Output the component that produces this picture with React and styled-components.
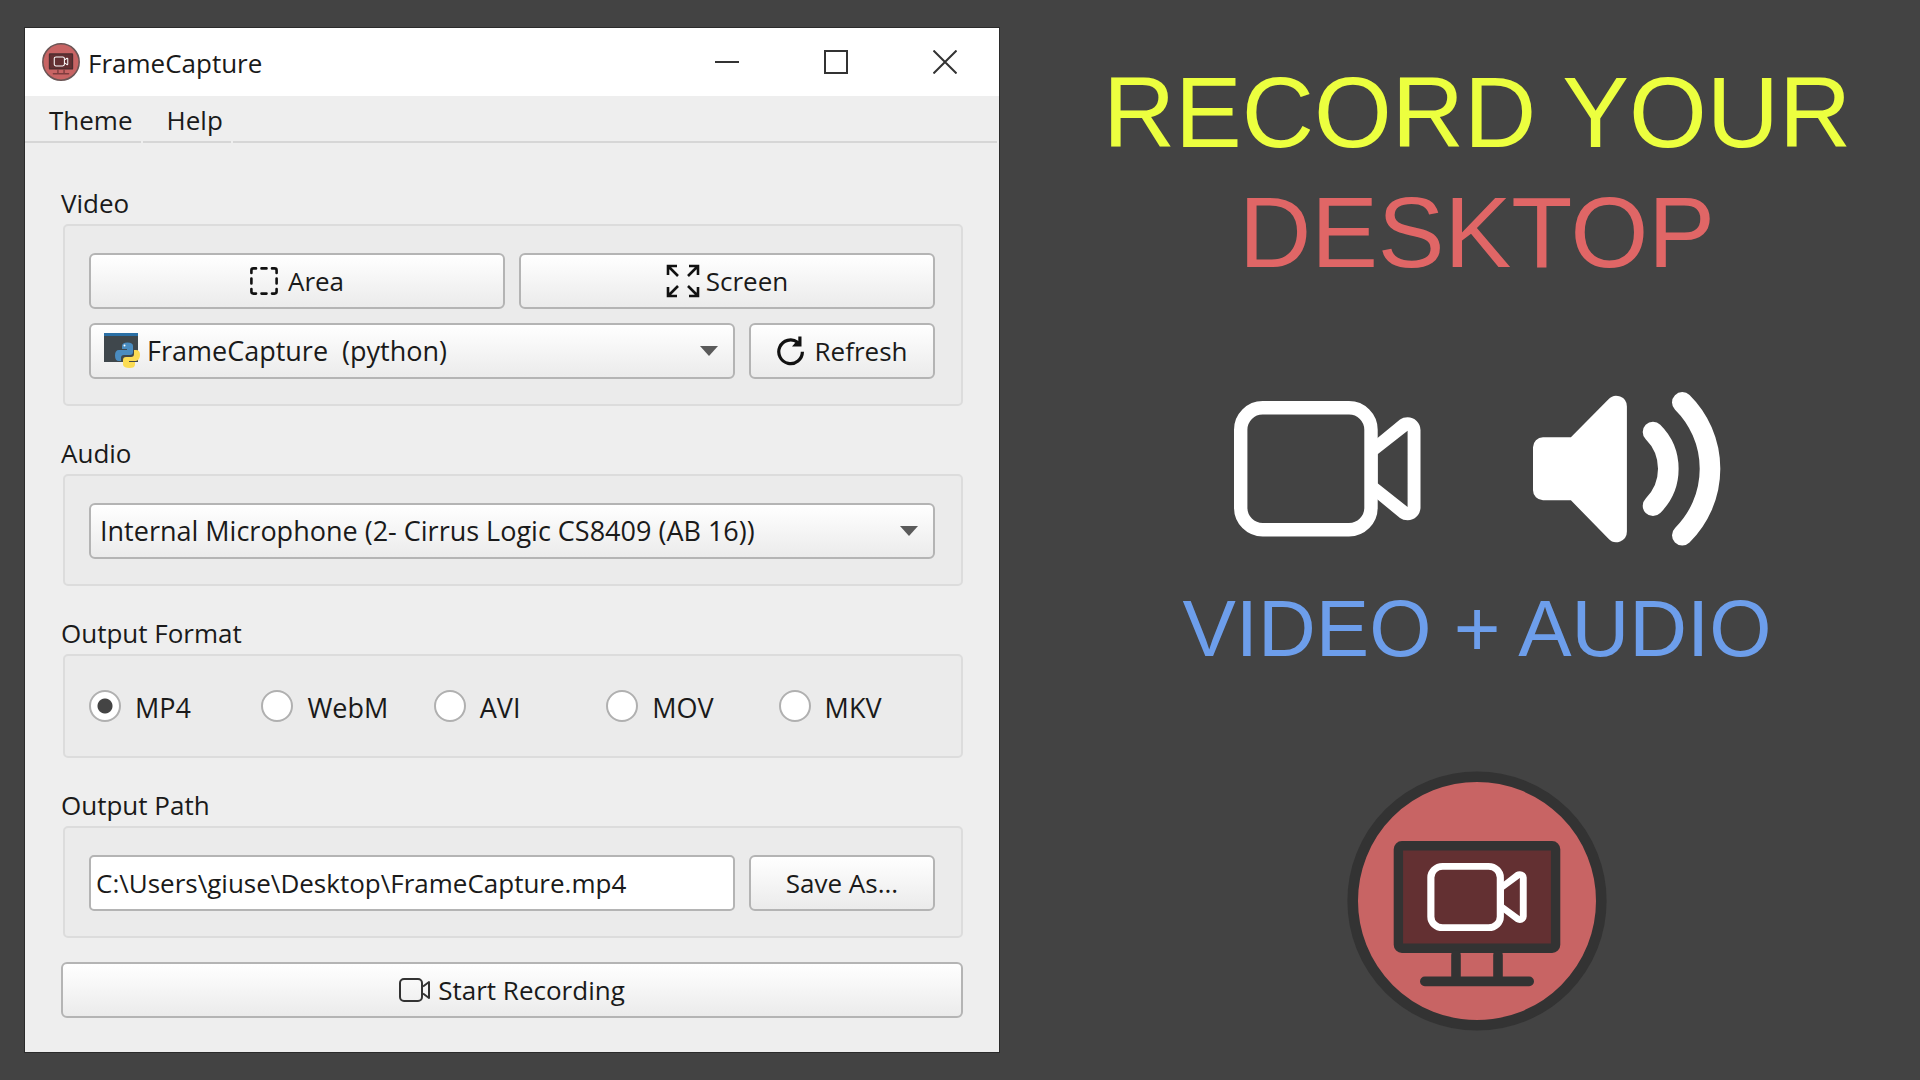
import { useState } from "react";
import styled, { createGlobalStyle } from "styled-components";

const formats = ["MP4", "WebM", "AVI", "MOV", "MKV"];

export default function App() {
  const [format, setFormat] = useState("MP4");
  const [path, setPath] = useState("C:\\Users\\giuse\\Desktop\\FrameCapture.mp4");

  return (
    <>
      <GlobalStyle />
      <Page>
        <Window>
          <TitleBar>
            <Logo small />
            <Title>FrameCapture</Title>
            <WindowButton aria-label="Minimize">
              <svg width="24" height="24" viewBox="0 0 24 24">
                <path d="M0 12h24" />
              </svg>
            </WindowButton>
            <WindowButton aria-label="Maximize">
              <svg width="24" height="24" viewBox="0 0 24 24">
                <path d="M1 1h22v22H1z" />
              </svg>
            </WindowButton>
            <WindowButton aria-label="Close">
              <svg width="24" height="24" viewBox="0 0 24 24">
                <path d="M0.5 0.5l23 23M23.5 0.5l-23 23" />
              </svg>
            </WindowButton>
          </TitleBar>
          <MenuBar>
            <MenuItem>Theme</MenuItem>
            <MenuItem>Help</MenuItem>
            <MenuFiller />
          </MenuBar>
          <Form onSubmit={(e) => e.preventDefault()}>
            <Section>
              <SectionTitle>Video</SectionTitle>
              <Group>
                <Row>
                  <Button type="button" $grow $gap={10}>
                    <AreaIcon />
                    Area
                  </Button>
                  <Button type="button" $grow $gap={6}>
                    <ScreenIcon />
                    Screen
                  </Button>
                </Row>
                <Row>
                  <SelectBox>
                    <SelectIcon>
                      <PythonIcon />
                    </SelectIcon>
                    <Select aria-label="Video" $icon>
                      <option>{"FrameCapture\u00a0 (python)"}</option>
                    </Select>
                    <Arrow />
                  </SelectBox>
                  <Button type="button" $gap={10}>
                    <RefreshIcon />
                    Refresh
                  </Button>
                </Row>
              </Group>
            </Section>

            <Section>
              <SectionTitle as="label" htmlFor="audio">
                Audio
              </SectionTitle>
              <Group>
                <SelectBox>
                  <Select id="audio">
                    <option>
                      Internal Microphone (2- Cirrus Logic CS8409 (AB 16))
                    </option>
                  </Select>
                  <Arrow />
                </SelectBox>
              </Group>
            </Section>

            <Section>
              <SectionTitle>Output Format</SectionTitle>
              <RadioGroup>
                {formats.map((name) => (
                  <RadioLabel key={name}>
                    <Radio
                      type="radio"
                      name="format"
                      checked={format === name}
                      onChange={() => setFormat(name)}
                    />
                    <RadioText>{name}</RadioText>
                  </RadioLabel>
                ))}
              </RadioGroup>
            </Section>

            <Section>
              <SectionTitle as="label" htmlFor="path">
                Output Path
              </SectionTitle>
              <Group>
                <Row>
                  <PathInput
                    id="path"
                    value={path}
                    onChange={(e) => setPath(e.target.value)}
                  />
                  <Button type="button">Save As...</Button>
                </Row>
              </Group>
            </Section>

            <StartButton $gap={7}>
              <SmallCamera />
              Start Recording
            </StartButton>
          </Form>
        </Window>

        <Promo>
          <Headline>
            Record your <Accent>Desktop</Accent>
          </Headline>
          <Media>
            <svg width="187" height="136" viewBox="0 0 187 136">
              <Camera />
            </svg>
            <Speaker />
          </Media>
          <Tagline>Video + Audio</Tagline>
          <Logo />
        </Promo>
      </Page>
    </>
  );
}

function Camera() {
  return (
    <g>
      <rect
        x="6.7"
        y="6.7"
        width="130.3"
        height="122"
        rx="22"
        fill="none"
        stroke="#fff"
        strokeWidth="13.4"
      />
      <path
        fill="#fff"
        fillRule="evenodd"
        d="M142 38.3L166 18.6Q169 16.3 173.6 16.3A13 13 0 0 1 186.5 29V106.5A13 13 0 0 1 173.6 119.3Q169 119.3 166 117L142 97.3ZM143.6 53.3L173.6 29.7V106L143.6 82.3Z"
      />
    </g>
  );
}

function Speaker() {
  return (
    <svg width="188" height="154" viewBox="0 0 188 154" fill="none">
      <path
        fill="#fff"
        d="M10 45.3H37.9L75.5 7.3A10.6 10.6 0 0 1 93.9 14.5V139.5A10.6 10.6 0 0 1 75.5 146.7L37.9 108.3H10A10 10 0 0 1 0 98.3V55.3A10 10 0 0 1 10 45.3Z"
      />
      <g stroke="#fff" strokeWidth="20.6" strokeLinecap="round">
        <path d="M120 40A52 52 0 0 1 120 113.7" />
        <path d="M149.3 10.4A93.4 93.4 0 0 1 149.3 143.2" />
      </g>
    </svg>
  );
}

function Logo({ small }) {
  const size = small ? 38 : 260;
  return (
    <svg width={size} height={size} viewBox="0 0 260 260">
      <circle
        cx="130"
        cy="130"
        r="124.3"
        fill="#c86464"
        stroke={small ? "#6b5555" : "#333"}
        strokeWidth="10.6"
      />
      <rect
        x="51.4"
        y="74.7"
        width="157.2"
        height="102.6"
        rx="3.5"
        fill="#633032"
        stroke={small ? "#4a2c2e" : "#333"}
        strokeWidth="9.4"
      />
      <g
        stroke={small ? "#7d3c3e" : "#333"}
        strokeWidth="9.6"
        strokeLinecap="round"
      >
        <path d="M109 184V208M151 184V208M77.8 210.4H182.2" />
      </g>
      <g transform="translate(80.3 92) scale(0.533 0.503)">
        <Camera />
      </g>
    </svg>
  );
}

function AreaIcon() {
  return (
    <svg width="28" height="28" viewBox="0 0 28 28">
      <path
        fill="none"
        stroke="#111"
        strokeWidth="2.6"
        strokeLinecap="round"
        d="M1.4 6V3.4Q1.4 1.4 3.4 1.4H6M11.5 1.4h5M22 1.4h2.6q2 0 2 2V6M26.6 11.5v5M26.6 22v2.6q0 2-2 2H22M16.5 26.6h-5M6 26.6H3.4q-2 0-2-2V22M1.4 16.5v-5"
      />
    </svg>
  );
}

function ScreenIcon() {
  return (
    <svg width="34" height="34" viewBox="0 0 34 34">
      <path
        fill="none"
        stroke="#111"
        strokeWidth="2.6"
        d="M2 11V2h9M2 2l10 10M23 2h9v9M32 2L22 12M32 23v9h-9M32 32L22 22M11 32H2v-9M2 32l10-10"
      />
    </svg>
  );
}

function RefreshIcon() {
  return (
    <svg width="28" height="30" viewBox="0 0 28 30">
      <path
        fill="none"
        stroke="#111"
        strokeWidth="3.2"
        d="M25.4 15.8A11.8 11.8 0 1 1 20.6 6.3"
      />
      <path fill="#111" d="M24.5 0.5V10.4H15L18 7L21.3 5V0.5Z" />
    </svg>
  );
}

function PythonIcon() {
  return (
    <svg width="36" height="36" viewBox="0 0 36 36">
      <path fill="#3f474c" d="M0 1h34v28H0z" />
      <path fill="#2a6fa5" d="M0 0h34v3H0z" />
      <path
        fill="#4a8cc0"
        d="M18 13q0-3.500 5.500-3.500T29 13v6q0 3-3 3h-6q-3 0-3 3v3h-2q-4 0-4-5.500T15 17h8v-1h-5z"
      />
      <path
        fill="#fbdc54"
        d="M30 17h2q4 0 4 5t-4 6h-7v1h6v2.500q0 3.500-5.500 3.500T19 32v-5q0-3 3-3h5q3 0 3-3z"
      />
      <circle cx="20.500" cy="12.500" r="1" fill="#fff" />
    </svg>
  );
}

function SmallCamera() {
  return (
    <svg width="32" height="24" viewBox="0 0 32 24">
      <g fill="none" stroke="#333" strokeWidth="2">
        <rect x="1" y="1" width="22" height="22" rx="4" />
        <path strokeLinejoin="round" d="M24 8.500l6-4.500v16l-6-4.500" />
      </g>
    </svg>
  );
}

function Arrow() {
  return (
    <ArrowIcon width="18" height="10" viewBox="0 0 18 10">
      <path fill="#5a5a5a" d="M0 0h18L9 10z" />
    </ArrowIcon>
  );
}

const GlobalStyle = createGlobalStyle`
  * {
    box-sizing: border-box;
  }
  body {
    margin: 0;
    background: #434343;
  }
  button, input, select {
    font: inherit;
    color: inherit;
  }
  svg {
    display: block;
    flex-shrink: 0;
  }
`;
const Page = styled.main`
  display: grid;
  grid-template-columns: 974fr 886fr;
  align-items: start;
  gap: 35px;
  min-height: 100vh;
  padding: 28px 0 28px 25px;
`;
const Window = styled.div`
  background: #eee;
  box-shadow: 0 0 0 1px #2b2b2b;
  color: #1a1a1a;
  font-family: "Open Sans", "Noto Sans", sans-serif;
  font-size: 26px;
  line-height: 36px;
`;
const TitleBar = styled.header`
  display: flex;
  align-items: center;
  height: 68px;
  padding-left: 17px;
  background: #fff;
`;
const Title = styled.h1`
  flex: 1;
  margin: 0 0 0 8px;
  padding-top: 2px;
  font-size: inherit;
  font-weight: 400;
`;
const WindowButton = styled.button`
  display: flex;
  align-items: center;
  justify-content: center;
  width: 109px;
  height: 66px;
  padding: 0;
  border: none;
  background: transparent;

  path {
    fill: none;
    stroke: #333;
    stroke-width: 2;
  }
`;
const MenuBar = styled.nav`
  display: flex;
  gap: 2px;
  padding-right: 2px;
`;
const MenuItem = styled.button`
  padding: 6px 8px 3px 24px;
  border: none;
  border-bottom: 2px solid #d6d6d6;
  background: transparent;
`;
const MenuFiller = styled.div`
  flex: 1;
  border-bottom: 2px solid #d6d6d6;
`;
const Form = styled.form`
  display: flex;
  flex-direction: column;
  padding: 41px 36px 34px;
`;
const Section = styled.section`
  display: flex;
  flex-direction: column;
  gap: 2px;
  margin-bottom: 28px;

  &:last-of-type {
    margin-bottom: 24px;
  }
`;
const SectionTitle = styled.h2`
  margin: 0;
  font-size: inherit;
  font-weight: 400;
  line-height: 38px;
`;
const Group = styled.div`
  display: flex;
  flex-direction: column;
  gap: 14px;
  margin-left: 2px;
  padding: 27px 26px 25px 24px;
  border: 2px solid #dcdcdc;
  border-radius: 5px;
  background: #ebebeb;
`;
const RadioGroup = styled(Group)`
  display: grid;
  grid-template-columns: repeat(5, 1fr);
  gap: 0;
  padding: 32px 10px 32px 24px;
  font-size: 27px;
`;
const RadioLabel = styled.label`
  display: flex;
  align-items: center;
  gap: 14px;
`;
const RadioText = styled.span`
  padding-top: 4px;
  line-height: 32px;
`;
const Radio = styled.input`
  appearance: none;
  width: 32px;
  height: 32px;
  margin: 0;
  border: 2px solid #b0b0b0;
  border-radius: 50%;
  background: #fff;

  &:checked {
    background: radial-gradient(circle, #444 7px, #fff 8px);
  }
`;
const Row = styled.div`
  display: flex;
  gap: 14px;
`;
const Button = styled.button`
  display: flex;
  align-items: center;
  justify-content: center;
  gap: ${({ $gap }) => $gap || 0}px;
  flex: ${({ $grow }) => ($grow ? "1 1 0" : "0 0 186px")};
  height: 56px;
  padding: 0;
  border: 2px solid #b4b4b4;
  border-radius: 6px;
  background: linear-gradient(#fff, #ebebeb);
`;
const StartButton = styled(Button)`
  flex: none;
`;
const SelectBox = styled.div`
  position: relative;
  flex: 1;
`;
const Select = styled.select`
  appearance: none;
  display: block;
  width: 100%;
  height: 56px;
  padding: 0 50px 0 ${({ $icon }) => ($icon ? 56 : 9)}px;
  border: 2px solid #b4b4b4;
  border-radius: 6px;
  background: linear-gradient(#fff, #ebebeb);
  font-size: 27px;
`;
const SelectIcon = styled.span`
  position: absolute;
  top: 10px;
  left: 15px;
  pointer-events: none;
`;
const ArrowIcon = styled.svg`
  position: absolute;
  top: 23px;
  right: 17px;
  pointer-events: none;
`;
const PathInput = styled.input`
  flex: 1;
  min-width: 0;
  height: 56px;
  padding: 0 5px;
  border: 2px solid #b4b4b4;
  border-radius: 5px;
  background: #fff;
`;
const Promo = styled.section`
  display: flex;
  flex-direction: column;
  align-items: center;
  padding-top: 24px;
  font-family: "Liberation Sans", Arial, sans-serif;
  text-align: center;
  text-transform: uppercase;
`;
const Headline = styled.h2`
  margin: 0 0 100px;
  color: #ecff3f;
  font-size: 100px;
  font-weight: 400;
  line-height: 120px;
`;
const Accent = styled.span`
  display: block;
  color: #e06666;
`;
const Media = styled.div`
  display: flex;
  align-items: center;
  gap: 112px;
`;
const Tagline = styled.p`
  margin: 35px 0 94px;
  color: #6d9eeb;
  font-size: 80px;
  line-height: 96px;
`;
